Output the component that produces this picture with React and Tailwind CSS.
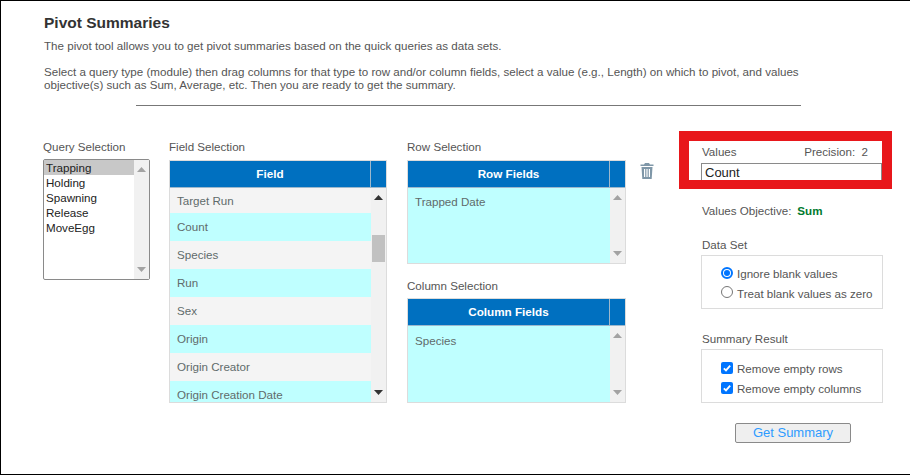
const fields = ["Target Run", "Count", "Species", "Run", "Sex", "Origin", "Origin Creator", "Origin Creation Date"];
const queries = ["Trapping", "Holding", "Spawning", "Release", "MoveEgg"];

const Arrow = ({ down, dark }) => (
  <svg width="9" height="5" viewBox="0 0 9 5" className={dark ? "text-[#333]" : "text-[#a3a3a3]"}>
    <path d={down ? "M0 0h9L4.5 5z" : "M0 5h9L4.5 0z"} fill="currentColor" />
  </svg>
);

const Scroll = ({ dark, thumb }) => (
  <div className="w-[15px] bg-[#f1f1f1] flex flex-col items-center justify-between py-[7px] relative">
    <Arrow dark={dark} />
    {thumb && <div className="absolute top-[47px] left-[1px] w-[13px] h-[27px] bg-[#c1c1c1]"></div>}
    <Arrow down dark={dark} />
  </div>
);

const Header = ({ title }) => (
  <div className="flex h-[27px] shrink-0 bg-[#0070c0] border-b border-[#9db8cc] text-white font-bold text-[11.7px]">
    <div className="flex-1 flex items-center justify-center border-r border-[#9db8cc]">{title}</div>
    <div className="w-[15px]"></div>
  </div>
);

const DropBox = ({ title, value, tall }) => (
  <div className={`border border-[#dcdcdc] w-[219px] flex flex-col ${tall ? "h-[105px]" : "h-[104px]"}`}>
    <Header title={title} />
    <div className="flex flex-1 min-h-0">
      <div className={`flex-1 bg-[#bfffff] text-[#5f6b6b] px-[7px] ${tall ? "pt-[6px]" : "pt-[5px]"}`}>{value}</div>
      <Scroll />
    </div>
  </div>
);

export default function App() {
  return (
    <div className="w-[910px] h-[475px] overflow-hidden bg-white border-l border-t border-b border-black text-[#555] text-[11.6px] relative" style={{ fontFamily: '"Liberation Sans", Arial, sans-serif' }}>
      <div className="pl-[43px] pt-[13px]">
        <h1 className="text-[15.5px] leading-[18px] font-bold text-[#333]">Pivot Summaries</h1>
        <p className="mt-[7px] leading-[14px]">The pivot tool allows you to get pivot summaries based on the quick queries as data sets.</p>
        <p className="mt-[12px] leading-[13px] w-[790px]">
          Select a query type (module) then drag columns for that type to row and/or column fields, select a value (e.g., Length) on which to pivot, and values objective(s) such as Sum, Average, etc. Then you are ready to get the summary.
        </p>
        <div className="ml-[92px] mt-[14px] w-[665px] h-px bg-[#777]"></div>

        <div className="flex mt-[34px]">
          <div className="w-[125px]">
            <div className="h-[14px] leading-[14px] -ml-[1px]">Query Selection</div>
            <div className="mt-[5px] -ml-[1px] w-[107px] h-[121px] border border-[#8a8a8a] rounded-[2px] flex leading-[15px] text-[#222]">
              <div className="flex-1">
                {queries.map((q, i) => (
                  <div key={q} className={i === 0 ? "bg-[#c8c8c8] pl-[2px]" : "pl-[2px]"}>{q}</div>
                ))}
              </div>
              <Scroll />
            </div>
          </div>

          <div className="w-[238px]">
            <div className="h-[14px] leading-[14px]">Field Selection</div>
            <div className="mt-[6px] w-[218px] h-[243px] border border-[#dcdcdc] flex flex-col overflow-hidden">
              <Header title="Field" />
              <div className="flex flex-1 min-h-0">
                <div className="flex-1 overflow-hidden">
                  {fields.map((f, i) => (
                    <div key={f} className={`shrink-0 flex items-center pl-[7px] text-[#5f6b6b] ${i === 0 ? "h-[25px]" : "h-[28px]"} ${i % 2 ? "bg-[#bfffff]" : "bg-[#f4f4f4]"}`}>{f}</div>
                  ))}
                </div>
                <Scroll dark thumb />
              </div>
            </div>
          </div>

          <div className="w-[272px] flex">
            <div>
              <div className="h-[14px] leading-[14px]">Row Selection</div>
              <div className="mt-[6px]"><DropBox title="Row Fields" value="Trapped Date" /></div>
              <div className="h-[14px] leading-[14px] mt-[15px]">Column Selection</div>
              <div className="mt-[5px]"><DropBox title="Column Fields" value="Species" tall /></div>
            </div>
            <svg width="14" height="16" viewBox="0 0 14 16" className="ml-[14px] mt-[23px] text-[#7f97a8]">
              <path d="M5 0h4l1 1.5h3.5V3H.5V1.5H4zM1.5 4h11l-.8 12H2.3zM4 6v8h1.2V6zm2.4 0v8h1.2V6zm2.4 0v8H10V6z" fill="currentColor" fillRule="evenodd" />
            </svg>
          </div>

          <div className="w-[182px] mt-[5px] ml-[22px]">
            <div className="flex justify-between pl-[1px] pr-[15px] leading-[14px]">
              <span>Values</span>
              <span>Precision:&nbsp; 2</span>
            </div>
            <div className="mt-[4px] w-[181px] h-[19px] border border-[#8a8a8a] px-[3px] leading-[17px] text-[#222] text-[13px]">Count</div>
            <div className="mt-[22px] flex items-center pl-[1px] leading-[14px]">
              Values Objective:<span className="ml-[6px] font-bold text-[#007a2e]">Sum</span>
            </div>
            <div className="mt-[20px] leading-[14px] pl-[1px]">Data Set</div>
            <div className="mt-[3px] w-[182px] h-[54px] border border-[#dcdcdc] pl-[19px] pt-[8px] whitespace-nowrap">
              <label className="flex items-center h-[20px]">
                <span className="w-[12px] h-[12px] -mt-[3px] shrink-0 rounded-full border-2 border-[#0075ff] flex items-center justify-center mr-[4px]"><span className="w-[6px] h-[6px] rounded-full bg-[#0075ff]"></span></span>
                Ignore blank values
              </label>
              <label className="flex items-center h-[19px]">
                <span className="w-[12px] h-[12px] -mt-[3px] shrink-0 rounded-full border border-[#767676] mr-[4px]"></span>
                Treat blank values as zero
              </label>
            </div>
            <div className="mt-[23px] leading-[14px] pl-[1px]">Summary Result</div>
            <div className="mt-[3px] w-[182px] h-[54px] border border-[#dcdcdc] pl-[19px] pt-[9px] whitespace-nowrap">
              {["Remove empty rows", "Remove empty columns"].map((t) => (
                <label key={t} className="flex items-center h-[20px]">
                  <span className="w-[12px] h-[12px] -mt-[3px] shrink-0 rounded-[2px] bg-[#0075ff] flex items-center justify-center mr-[4px]">
                    <svg width="10" height="10" viewBox="0 0 11 11"><path d="M2 5.8l2.4 2.4L9 3" fill="none" stroke="#fff" strokeWidth="2" /></svg>
                  </span>
                  {t}
                </label>
              ))}
            </div>
            <div className="mt-[20px] ml-[34px] w-[116px] h-[20px] border border-[#8a8a8a] rounded-[2px] bg-[#efefef] text-[#2e9bff] text-[13px] flex items-center justify-center">Get Summary</div>
          </div>
        </div>
      </div>

      {/* red annotation over the values box */}
      <div className="absolute left-[678px] top-[130px] w-[213px] h-[58px] border-[10px] border-b-[9px] border-[#e8171b]"></div>
    </div>
  );
}
